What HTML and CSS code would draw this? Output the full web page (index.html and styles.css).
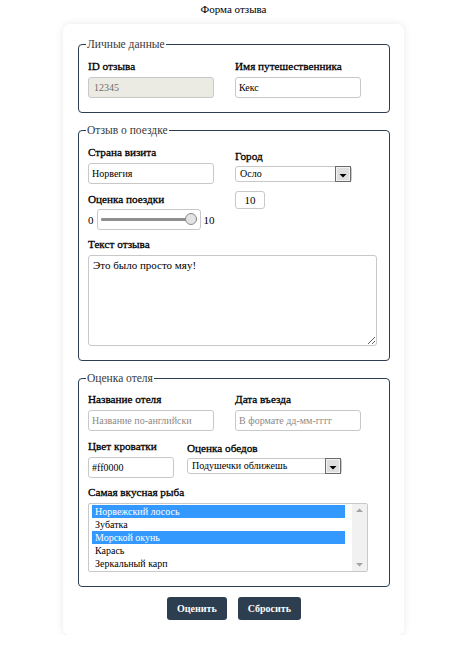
FILE: index.html
```html
<!DOCTYPE html>
<html lang="ru">
<head>
<meta charset="utf-8">
<title>Форма отзыва</title>
<link rel="stylesheet" href="styles.css">
</head>
<body>
<div class="page">
  <h1 class="title">Форма отзыва</h1>
  <form class="card">
    <fieldset class="group">
      <legend>Личные данные</legend>
      <div class="row">
        <div class="field">
          <label class="lbl">ID отзыва</label>
          <input class="inp inp-dis" type="text" value="12345" disabled>
        </div>
        <div class="field">
          <label class="lbl">Имя путешественника</label>
          <input class="inp" type="text" value="Кекс">
        </div>
      </div>
    </fieldset>

    <fieldset class="group">
      <legend>Отзыв о поездке</legend>
      <div class="row">
        <div class="field">
          <label class="lbl">Страна визита</label>
          <input class="inp" type="text" value="Норвегия">
          <label class="lbl lbl-next">Оценка поездки</label>
          <div class="range-row">
            <span>0</span>
            <span class="range-box"><input class="range" type="range" min="0" max="10" value="10"></span>
            <span>10</span>
          </div>
        </div>
        <div class="field field-city">
          <label class="lbl">Город</label>
          <span class="sel-wrap sel-city">
            <select class="sel"><option>Осло</option></select>
            <svg class="sel-btn" width="16" height="16" viewBox="0 0 16 16" aria-hidden="true">
              <rect x="0.5" y="0.5" width="15" height="15" fill="#dedede" stroke="#6b6b6b"/>
              <rect x="1.5" y="1.5" width="13" height="13" fill="none" stroke="#f2f2f2"/>
              <path d="M4.5 8 L11.5 8 L8 11.5 Z" fill="#000"/>
            </svg>
          </span>
          <input class="num" type="text" value="10">
        </div>
      </div>
      <label class="lbl lbl-text">Текст отзыва</label>
      <textarea class="area">Это было просто мяу!</textarea>
    </fieldset>

    <fieldset class="group">
      <legend>Оценка отеля</legend>
      <div class="row">
        <div class="field">
          <label class="lbl">Название отеля</label>
          <input class="inp" type="text" placeholder="Название по-английски">
        </div>
        <div class="field">
          <label class="lbl">Дата въезда</label>
          <input class="inp" type="text" placeholder="В формате дд-мм-гггг">
        </div>
      </div>
      <div class="row row2">
        <div class="field">
          <label class="lbl">Цвет кроватки</label>
          <input class="inp inp-color" type="text" value="#ff0000">
        </div>
        <div class="field field-meal">
          <label class="lbl">Оценка обедов</label>
          <span class="sel-wrap sel-meal">
            <select class="sel"><option>Подушечки оближешь</option></select>
            <svg class="sel-btn" width="16" height="16" viewBox="0 0 16 16" aria-hidden="true">
              <rect x="0.5" y="0.5" width="15" height="15" fill="#dedede" stroke="#6b6b6b"/>
              <rect x="1.5" y="1.5" width="13" height="13" fill="none" stroke="#f2f2f2"/>
              <path d="M4.5 8 L11.5 8 L8 11.5 Z" fill="#000"/>
            </svg>
          </span>
        </div>
      </div>
      <label class="lbl lbl-fish">Самая вкусная рыба</label>
      <div class="list" role="listbox" aria-multiselectable="true">
        <div class="opts">
          <div class="opt on" role="option" aria-selected="true">Норвежский лосось</div>
          <div class="opt" role="option">Зубатка</div>
          <div class="opt on" role="option" aria-selected="true">Морской окунь</div>
          <div class="opt" role="option">Карась</div>
          <div class="opt" role="option">Зеркальный карп</div>
        </div>
        <div class="sbar">
          <svg width="15" height="12" viewBox="0 0 15 12" aria-hidden="true"><path d="M4 8 L11 8 L7.5 4.5 Z" fill="#a3a3a3"/></svg>
          <svg width="15" height="12" viewBox="0 0 15 12" aria-hidden="true"><path d="M4 4 L11 4 L7.5 7.5 Z" fill="#a3a3a3"/></svg>
        </div>
      </div>
    </fieldset>

    <div class="actions">
      <button type="button" class="btn">Оценить</button>
      <button type="button" class="btn">Сбросить</button>
    </div>
  </form>
</div>
</body>
</html>
```
FILE: styles.css
```css
html, body {
  margin: 0;
  padding: 0;
  background: #ffffff;
}
body {
  font-family: "Liberation Serif", "Times New Roman", serif;
  color: #111;
}
.page {
  width: 341px;
  margin-left: 63px;
  padding-top: 2px;
}
.title {
  margin: 0;
  font-size: 11px;
  font-weight: normal;
  text-align: center;
  line-height: 14px;
  height: 22px;
  color: #000;
}
.card {
  background: #fff;
  border-radius: 7px;
  box-shadow: 0 0 8px rgba(0, 0, 0, 0.09);
  padding: 14px 14px 15px 15px;
}
.group {
  margin: 0 0 11px 0;
  padding: 8px 9px 14px 9px;
  border: 1px solid #2c3e50;
  border-radius: 4px;
  min-width: 0;
}
.group legend {
  font-size: 11.5px;
  color: #3a3a3a;
  padding: 0 1px;
  margin-left: -2px;
  line-height: 13px;
}
.row {
  display: flex;
  gap: 21px;
}
.field {
  display: flex;
  flex-direction: column;
  align-items: flex-start;
  width: 126px;
}
.lbl {
  display: block;
  font-size: 11.2px;
  line-height: 14px;
  font-weight: normal;
  color: #000;
  -webkit-text-stroke: 0.3px #000;
  margin-bottom: 4px;
}
.inp {
  box-sizing: border-box;
  width: 126px;
  height: 21px;
  border: 1px solid #c8c8c8;
  border-radius: 3px;
  padding: 0 3px;
  font-family: inherit;
  font-size: 10px;
  color: #000;
  background: #fff;
  outline: none;
}
.inp-dis:disabled {
  background: #ebebe4;
  color: #6d6d6d;
  padding-left: 5px;
}
.inp::placeholder {
  color: #8a8a8a;
}
.lbl-next {
  margin-top: 8px;
  margin-bottom: 3px;
}
.range-row {
  display: flex;
  align-items: center;
  gap: 3px;
  font-size: 11px;
  color: #000;
}
.range-box {
  box-sizing: border-box;
  width: 104px;
  height: 21px;
  border: 1px solid #c8c8c8;
  border-radius: 3px;
  display: flex;
  align-items: center;
  padding: 0 3px;
}
.range {
  -webkit-appearance: none;
  appearance: none;
  width: 100%;
  margin: 0;
  height: 13px;
  background: transparent;
}
.range::-webkit-slider-runnable-track {
  height: 3px;
  background: #8f8f8f;
  border-radius: 1px;
}
.range::-webkit-slider-thumb {
  -webkit-appearance: none;
  appearance: none;
  width: 12px;
  height: 12px;
  margin-top: -5px;
  border-radius: 50%;
  background: #e3e3e3;
  border: 1px solid #8a8a8a;
  box-sizing: border-box;
}
.field-city {
  padding-top: 4px;
}
.field-city .lbl {
  margin-bottom: 3px;
}
.sel-wrap {
  position: relative;
  display: block;
  height: 16px;
}
.sel {
  -webkit-appearance: none;
  appearance: none;
  box-sizing: border-box;
  display: block;
  width: 100%;
  height: 16px;
  font-family: inherit;
  font-size: 10px;
  line-height: 14px;
  color: #000;
  background: #fff;
  border: 1px solid #c8c8c8;
  border-radius: 3px;
  padding: 0 18px 0 4px;
  margin: 0;
  outline: none;
}
.sel-btn {
  position: absolute;
  right: 1px;
  top: 0;
}
.sel-city {
  width: 117px;
}
.num {
  box-sizing: border-box;
  width: 30px;
  height: 18px;
  margin-top: 9px;
  border: 1px solid #c8c8c8;
  border-radius: 3px;
  text-align: center;
  font-family: inherit;
  font-size: 11px;
  color: #000;
  padding: 0;
}
.lbl-text {
  margin-top: 7px;
}
.area {
  box-sizing: border-box;
  display: block;
  width: 289px;
  height: 91px;
  margin: 0;
  border: 1px solid #c8c8c8;
  border-radius: 3px;
  padding: 3px 4px;
  font-family: inherit;
  font-size: 11px;
  color: #000;
  resize: vertical;
}
.group:nth-of-type(3) {
  padding-top: 7px;
}
.row2 {
  margin-top: 8px;
  gap: 13px;
}
.row2 .field {
  width: auto;
}
.inp-color {
  width: 86px;
}
.field-meal {
  padding-top: 2px;
}
.field-meal .lbl {
  margin-bottom: 3px;
}
.sel-meal {
  width: 155px;
}
.lbl-fish {
  margin-top: 7px;
}
.list {
  box-sizing: border-box;
  display: flex;
  width: 280px;
  height: 69px;
  border: 1px solid #c8c8c8;
  border-radius: 2px;
  font-size: 10px;
  color: #000;
  background: #fff;
  overflow: hidden;
}
.opts {
  flex: 1;
  padding: 1px 7px 0 3px;
}
.opt {
  height: 13px;
  line-height: 13px;
  padding: 0 3px;
  white-space: nowrap;
}
.opt.on {
  background: #3399ff;
  color: #fff;
}
.sbar {
  width: 15px;
  background: #f1f1f1;
  display: flex;
  flex-direction: column;
  justify-content: space-between;
}
.sbar svg {
  display: block;
}
.actions {
  display: flex;
  justify-content: center;
  gap: 11px;
  margin-top: -1px;
}
.btn {
  height: 23px;
  padding: 0 10px;
  border: none;
  border-radius: 3px;
  background: #2c3e50;
  color: #fff;
  font-family: inherit;
  font-size: 10px;
  font-weight: bold;
}
```
